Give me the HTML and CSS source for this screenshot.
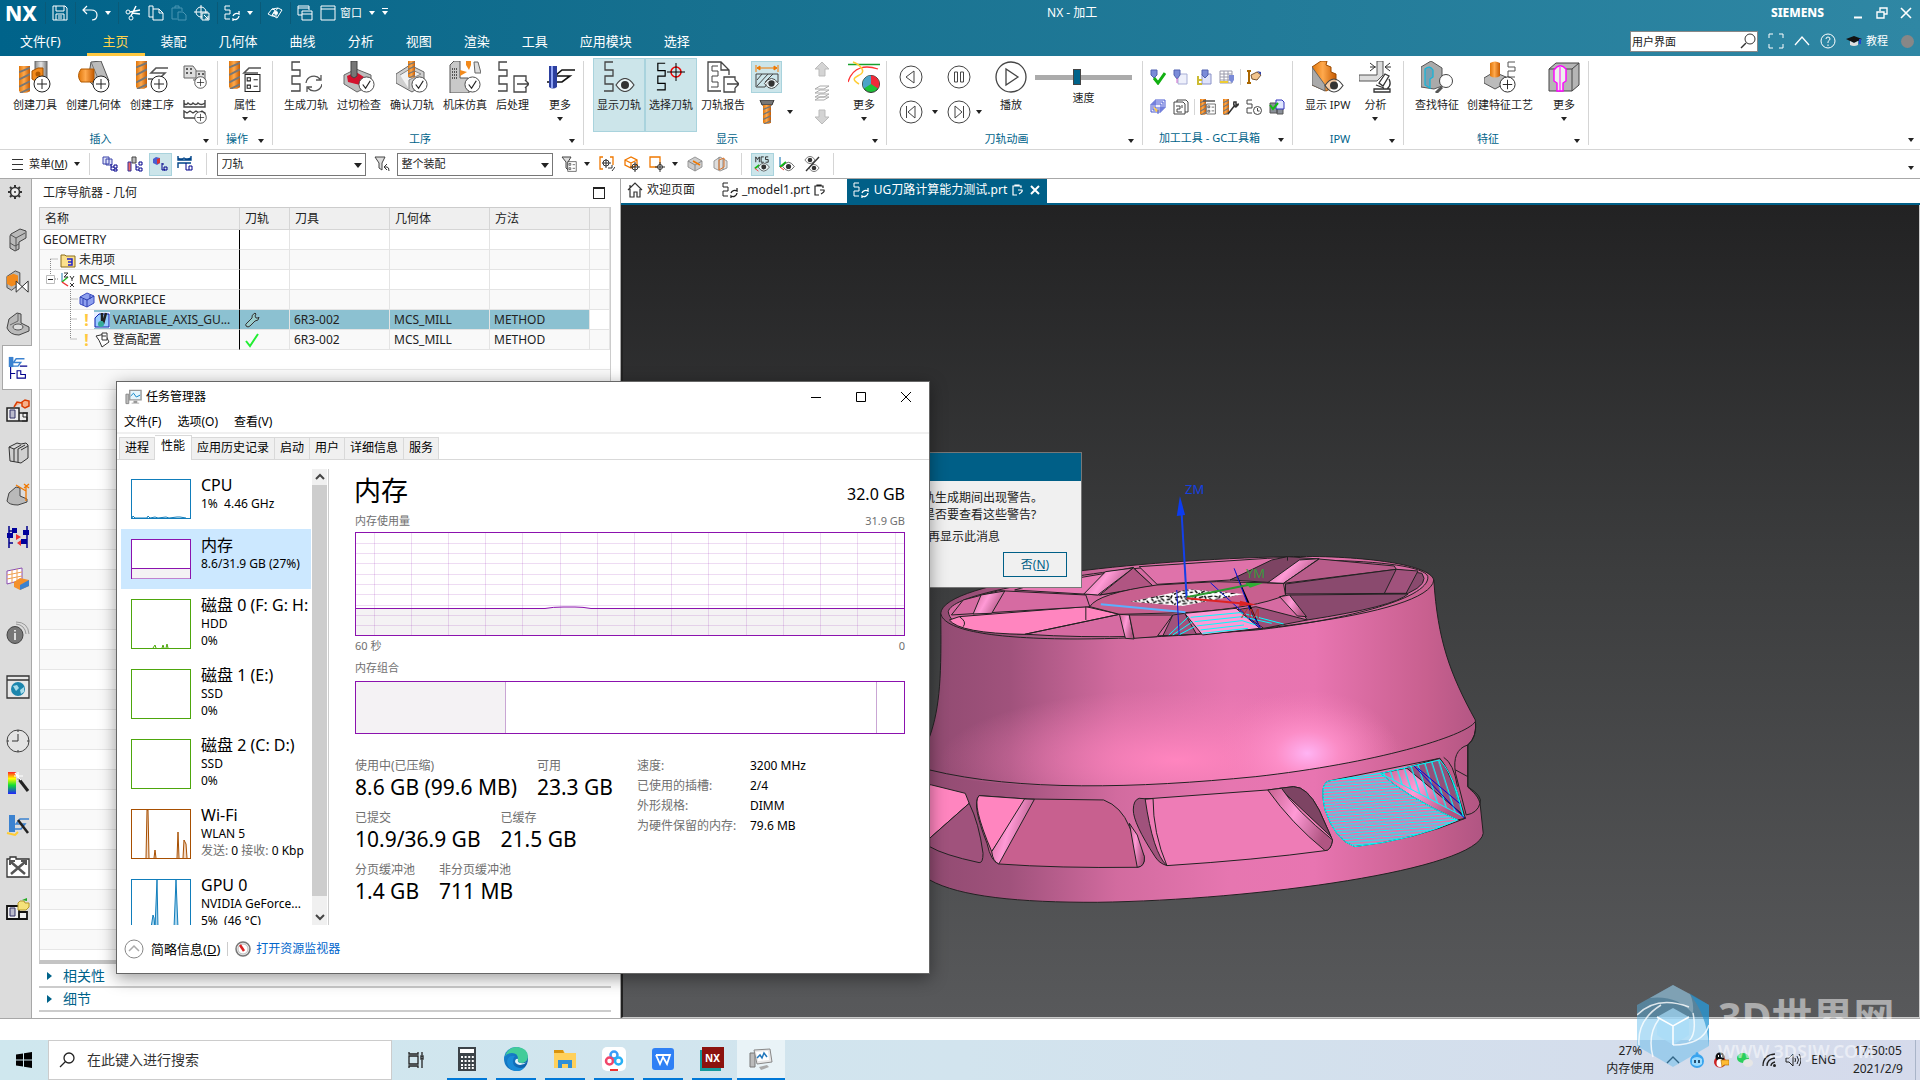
FILE: index.html
```html
<!DOCTYPE html>
<html lang="zh-CN">
<head>
<meta charset="utf-8">
<title>NX - 加工</title>
<link rel="stylesheet" href="styles.css">
</head>
<body>
<svg class="defs" aria-hidden="true">
  <defs>
    <linearGradient id="orange" x1="0" x2="1" y1="0" y2="0"><stop offset="0" stop-color="#e0760a"/><stop offset=".45" stop-color="#ffa94d"/><stop offset="1" stop-color="#c65a00"/></linearGradient>
    <linearGradient id="steel" x1="0" x2="1" y1="0" y2="0"><stop offset="0" stop-color="#8b8b8b"/><stop offset=".5" stop-color="#e6e6e6"/><stop offset="1" stop-color="#7a7a7a"/></linearGradient>
    <linearGradient id="edgeg" x1="0" x2="1" y1="0" y2="1"><stop offset="0" stop-color="#1a8ad6"/><stop offset="1" stop-color="#0c59a4"/></linearGradient>
    <linearGradient id="rainbow" x1="0" x2="0" y1="0" y2="1"><stop offset="0" stop-color="#f22"/><stop offset=".3" stop-color="#ff0"/><stop offset=".6" stop-color="#1d3"/><stop offset="1" stop-color="#22f"/></linearGradient>
  </defs>
  <symbol id="b-plus" viewBox="0 0 18 18"><circle cx="9" cy="9" r="8" fill="#fff" stroke="#222"/><path d="M9 4v10M4 9h10" stroke="#222" fill="none"/></symbol>
  <symbol id="b-check" viewBox="0 0 18 18"><circle cx="9" cy="9" r="8" fill="#fff" stroke="#444"/><path d="M5 9l3 4 5-8" stroke="#222" fill="none" stroke-width="1.3"/></symbol>
  <symbol id="b-drill" viewBox="0 0 10 30" preserveAspectRatio="none"><path d="M0 0h10v28q-5 4-10 0z" fill="url(#orange)"/><path d="M0 7l10-5M0 15l10-6M0 23l10-6M1 30l9-5" stroke="#777" stroke-width="2"/></symbol>
  <symbol id="b-zig" viewBox="0 0 12 32"><path d="M10 1H2v8h8v6H2v8h8v7H1" fill="none" stroke="currentColor" stroke-width="1.3"/></symbol>
  <symbol id="b-eye" viewBox="0 0 20 14"><path d="M1 7q9-13 18 0q-9 13-18 0z" fill="#fff" fill-opacity=".6" stroke="#444" stroke-width="1.2"/><circle cx="10" cy="7" r="4" fill="#333"/></symbol>
  <symbol id="b-list" viewBox="0 0 16 18"><path d="M1 1h14v16H1z" fill="#fff" stroke="#222"/><path d="M3 4h3v3H3zM3 11h3v3H3z" fill="none" stroke="#222"/><path d="M9 6h4M9 12h4" stroke="#222"/></symbol>

  <symbol id="i-tool" viewBox="0 0 32 32"><path d="M16 0h12v20H16z" fill="url(#steel)" stroke="#666"/><use href="#b-drill" x="0" y="5" width="11" height="27"/><path d="M13 10l6-3h5v11l-6 3-5-3z" fill="#f28a1c" stroke="#a55200"/><circle cx="19" cy="13" r="2.500" fill="#b25a00"/><use href="#b-plus" x="14" y="14" width="18" height="18"/></symbol>
  <symbol id="i-geom" viewBox="0 0 32 32"><path d="M13 1l10-1 8 20-12 8-9-9z" fill="#bbb" stroke="#555"/><path d="M13 1l6 14v12" fill="none" stroke="#777"/><path d="M3 8h13v13H3q-5-6 0-13z" fill="url(#orange)" stroke="#b25a00"/><use href="#b-plus" x="14" y="14" width="18" height="18"/></symbol>
  <symbol id="i-op" viewBox="0 0 32 32"><use href="#b-drill" x="0" y="0" width="11" height="28"/><path d="M32 7H20l-5 5h14l-6 6H12" fill="none" stroke="#555" stroke-width="1.600"/><use href="#b-plus" x="14" y="14" width="18" height="18"/></symbol>
  <symbol id="i-prog" viewBox="0 0 24 24"><path d="M1 1h9l3 4v8H1zM13 6h9v9H10" fill="#ddd" stroke="#666"/><path d="M3 4h2m2 0h2M3 8h2m2 0h2M15 9h2m2 0h2" stroke="#333" stroke-width="1.500"/><use href="#b-plus" x="11" y="11" width="13" height="13"/></symbol>
  <symbol id="i-method" viewBox="0 0 24 24"><path d="M1 0v7h21V0M1 3q2 3 4 0q3 3 5 0q3 3 5 0q3 3 7 0M1 18v-7l3 2 3-2 3 2 3-2 3 2 3-2 3 2v5M1 18h11" fill="none" stroke="#444" stroke-width="1.400"/><use href="#b-plus" x="11" y="11" width="13" height="13"/></symbol>
  <symbol id="i-prop" viewBox="0 0 32 32"><use href="#b-drill" x="0" y="0" width="11" height="28"/><path d="M32 7H20l-5 5h14" fill="none" stroke="#555" stroke-width="1.600"/><use href="#b-list" x="15" y="12" width="17" height="20"/></symbol>
  <symbol id="i-gen" viewBox="0 0 32 32"><use href="#b-zig" width="12" height="32"/><path d="M16 22a8 8 0 0 1 14-4M32 23a8 8 0 0 1-14 4M31 14v5h-5M17 31v-5h5" fill="none" stroke="#555" stroke-width="1.300"/></symbol>
  <symbol id="i-gouge" viewBox="0 0 32 32"><path d="M1 14l12-6 15 6v10l-14 7-13-8z" fill="#bdbdbd" stroke="#666"/><path d="M4 15l9-4 8 5-4 8-12-3z" fill="#d3122d"/><path d="M8 0h6v15l-3 2-3-2z" fill="#777" stroke="#444"/><use href="#b-check" x="15" y="15" width="17" height="17"/></symbol>
  <symbol id="i-verify" viewBox="0 0 32 32"><path d="M0 13L14 4l14 7v12l-12 8L0 22z" fill="#cfcfcf" stroke="#666"/><path d="M4 14l10-6 11 5-12 6v9" fill="#f2f2f2" stroke="#888"/><use href="#b-drill" x="12" y="0" width="7" height="17"/><use href="#b-check" x="15" y="15" width="17" height="17"/></symbol>
  <symbol id="i-sim" viewBox="0 0 32 32"><path d="M1 4l4-4h6v17h8l1 4v11H1z" fill="#c9c9c9" stroke="#555"/><path d="M25 1h4l3 11h-6z" fill="#ddd" stroke="#666"/><path d="M3 8h6M3 11h6M3 14h6M3 17h6" stroke="#555" stroke-width="2" stroke-dasharray="1 1"/><path d="M17 0h5v4l-2 5-3-5zM11 9l7 2-7 4z" fill="#f28a1c"/><use href="#b-check" x="15" y="15" width="17" height="17"/></symbol>
  <symbol id="i-post" viewBox="0 0 32 32"><use href="#b-zig" width="12" height="32"/><path d="M29 20v-5H17v16h12v-5M20 23h11M28 19l4 4-4 4" fill="none" stroke="#444" stroke-width="1.300"/></symbol>
  <symbol id="i-moreop" viewBox="0 0 32 32"><path d="M31 9H18l-7 6h15l-8 6H3" fill="none" stroke="#111" stroke-width="1.600"/><path d="M5 5h8v21q-4 3-8 0z" fill="#2c3f9e"/><path d="M8 5v22" stroke="#8fa2f2" stroke-width="2"/></symbol>
  <symbol id="i-show" viewBox="0 0 32 32"><use href="#b-zig" width="12" height="32"/><use href="#b-eye" x="12" y="17" width="20" height="14"/></symbol>
  <symbol id="i-pick" viewBox="0 0 32 32"><g color="#000"><use href="#b-zig" x="1" y="1" width="11" height="30"/></g><circle cx="21" cy="11" r="5" fill="none" stroke="#e00" stroke-width="1.500"/><path d="M12 11h18M21 2v18" stroke="#000"/></symbol>
  <symbol id="i-report" viewBox="0 0 32 32"><path d="M14 30H1V1h13l8 8v5M14 1v8h8" fill="none" stroke="#444" stroke-width="1.300"/><path d="M11 5H5v5h6v5H5v6h6v5H4" fill="none" stroke="#444"/><path d="M28 19v-3H17v15h11v-4M20 23h11M28 19l4 4-4 4" fill="#fff" stroke="#444" stroke-width="1.300"/></symbol>
  <symbol id="i-ipwshow" viewBox="0 0 26 26"><path d="M3 4h20M3 4l3-2v4zM23 4l-3-2v4zM2 1v7M24 1v7" stroke="#f07800" fill="#f07800"/><path d="M2 10h22v8H14l-3 5H2z" fill="none" stroke="#444"/><path d="M3 16l5-6M3 22l11-12M11 18l8-8" stroke="#444"/><use href="#b-eye" x="9" y="14" width="17" height="11"/></symbol>
  <symbol id="i-bolt" viewBox="0 0 16 24"><path d="M1 0h14l-2 5H3z" fill="#777" stroke="#333"/><use href="#b-drill" x="4" y="5" width="8" height="19"/></symbol>
  <symbol id="i-up" viewBox="0 0 16 16"><path d="M8 1l7 7h-4v7H5V8H1z" fill="#d4d4d4" stroke="#bbb"/></symbol>
  <symbol id="i-down" viewBox="0 0 16 16"><path d="M8 15l7-7h-4V1H5v7H1z" fill="#d4d4d4" stroke="#bbb"/></symbol>
  <symbol id="i-layers" viewBox="0 0 16 16"><path d="M1 4l5-3h9l-5 3zM1 8l5-3h9l-5 3zM1 12l5-3h9l-5 3zM1 15l5-3h9l-5 3z" fill="#fff" stroke="#aaa"/></symbol>
  <symbol id="i-moreshow" viewBox="0 0 32 32"><path d="M0 3.500h32" stroke="#16a02c" stroke-width="1.500"/><path d="M0 21C5 5 18 4 30 8" fill="none" stroke="#f33" stroke-width="1.300"/><path d="M5 1c8 3 12 9 8 12s-12 4-2 10" fill="none" stroke="#fc3" stroke-width="1.500"/><circle cx="23" cy="23" r="8.500" fill="#1cc238" stroke="#333"/><path d="M23 23V14.500a8.500 8.500 0 0 1 7 13z" fill="#f02a3a"/><path d="M23 23V14.500a8.500 8.500 0 0 0-7 13z" fill="#4ba3c7"/></symbol>
  <symbol id="i-prev" viewBox="0 0 24 24"><circle cx="12" cy="12" r="11" fill="none" stroke="#444"/><path d="M15 6v12l-8-6z" fill="none" stroke="#444"/></symbol>
  <symbol id="i-pause" viewBox="0 0 24 24"><circle cx="12" cy="12" r="11" fill="none" stroke="#444"/><path d="M7.500 7h3v10h-3zM13.500 7h3v10h-3z" fill="none" stroke="#444"/></symbol>
  <symbol id="i-first" viewBox="0 0 24 24"><circle cx="12" cy="12" r="11" fill="none" stroke="#444"/><path d="M16 6v12l-7-6zM7.500 6v12" fill="none" stroke="#444"/></symbol>
  <symbol id="i-last" viewBox="0 0 24 24"><circle cx="12" cy="12" r="11" fill="none" stroke="#444"/><path d="M8 6v12l7-6zM16.500 6v12" fill="none" stroke="#444"/></symbol>
  <symbol id="i-play" viewBox="0 0 32 32"><circle cx="16" cy="16" r="15" fill="none" stroke="#444" stroke-width="1.300"/><path d="M11 8v16l12-8z" fill="none" stroke="#444" stroke-width="1.300"/></symbol>
  <symbol id="g-check" viewBox="0 0 16 16"><path d="M1 1h6v5l-3 3-3-3z" fill="#7a8bd8" stroke="#5060b0"/><path d="M4 9l4 5 7-10" fill="none" stroke="#12b012" stroke-width="3"/></symbol>
  <symbol id="g-doc" viewBox="0 0 16 16"><path d="M5 5h9v10H5z" fill="#eef0fb" stroke="#a9afd6"/><path d="M1 1h6v5l-3 4-3-4z" fill="#7a8bd8" stroke="#5060b0"/><path d="M4 9v5" stroke="#c6c"/></symbol>
  <symbol id="g-tree" viewBox="0 0 16 16"><path d="M6 5h9v10H6z" fill="#dfe3fa" stroke="#8a92c8"/><path d="M2 7v8h4M2 11h4" stroke="#cb3" fill="none" stroke-width="2"/><path d="M6 1h6v5l-3 3-3-3z" fill="#7a8bd8" stroke="#5060b0"/></symbol>
  <symbol id="g-table" viewBox="0 0 16 16"><path d="M1 2h12v12H1zM1 5h12M1 8h12M1 11h12M5 2v12M9 2v12" fill="#fff" stroke="#99a"/><path d="M1 13h8" stroke="#ec3" stroke-width="2"/><path d="M10 6h5v5l-2 3-3-3z" fill="#7a8bd8"/></symbol>
  <symbol id="g-flag" viewBox="0 0 16 16"><path d="M1 2h4M3 2v13M1 14h4" stroke="#a60" stroke-width="2"/><path d="M5 6l6-3 4 3-4 5-5-1z" fill="#f2c48d" stroke="#753"/><path d="M11 2l4 1v3z" fill="#34a"/></symbol>
  <symbol id="g-stack" viewBox="0 0 16 16"><path d="M5 1h10v8H5zM3 3h10v8H3zM1 5h10v8H1z" fill="#eef" stroke="#4a5bd0"/><path d="M3 7l6 5-3 1z" fill="#fc4"/><path d="M8 11v4" stroke="#4a5bd0"/></symbol>
  <symbol id="g-pages" viewBox="0 0 16 16"><path d="M4 1h9l2 2v10H4z" fill="#fff" stroke="#444"/><path d="M1 3h9l2 2v10H1z" fill="#fff" stroke="#444"/><path d="M3 7h4v3H4v3h5M9 6v3" fill="none" stroke="#444"/></symbol>
  <symbol id="g-dlist" viewBox="0 0 16 16"><use href="#b-drill" width="6" height="16"/><path d="M3 2h12" stroke="#555" stroke-width="1.500"/><use href="#b-list" x="6" y="4" width="10" height="12"/></symbol>
  <symbol id="g-wrench" viewBox="0 0 16 16"><use href="#b-drill" width="6" height="16"/><path d="M5 15l7-9M11 3q-1 4 2 5l3-3-3 1v-3z" fill="#fff" stroke="#333" stroke-width="1.500"/></symbol>
  <symbol id="g-clock" viewBox="0 0 16 16"><path d="M6 1H1v4h5v4H1v5h5" fill="none" stroke="#444"/><circle cx="11.500" cy="11.500" r="4" fill="#fff" stroke="#444"/><path d="M11.500 9v3h2" fill="none" stroke="#444"/></symbol>
  <symbol id="g-mach" viewBox="0 0 16 16"><path d="M1 4h7v10H1zM8 9h6v6H8z" fill="#8a8f98" stroke="#555"/><path d="M7 1h6l2 2v7H7z" fill="#dfe6ff" stroke="#33b"/><path d="M1 6l3 4 5-6" fill="none" stroke="#1b1" stroke-width="2"/></symbol>
  <symbol id="i-ipw" viewBox="0 0 32 32"><path d="M0 6l9-6h6l-1 4 5 2v5l5 2v12l-10 5L0 24z" fill="url(#orange)" stroke="#9c4b00"/><path d="M0 6v18l13 6V24z" fill="#aaa" stroke="#666"/><use href="#b-eye" x="12" y="17" width="20" height="15"/></symbol>
  <symbol id="i-analysis" viewBox="0 0 32 32"><path d="M18 0h6v14l-6 6H0v-6h18z" fill="#ddd" stroke="#555"/><path d="M11 2l5 4-5 4M31 2l-5 4 5 4M11 6h6M26 6h6" fill="none" stroke="#333"/><path d="M15 31h16v-3H15zM20 22l6-9 4 2-6 10zM17 24l8 3M30 18q3 6-2 10" fill="#fff" stroke="#333" stroke-width="1.300"/></symbol>
  <symbol id="i-find" viewBox="0 0 32 32"><path d="M0 6l10-6 11 7v18l-8 3L0 26z" fill="#aaa" stroke="#555"/><path d="M4 8q5-4 8 1v7l-3 2v9l-5-3z" fill="#7b9fb0" stroke="#19b5d8" stroke-width="1.300"/><path d="M21 26l-6 6" stroke="#555" stroke-width="3"/><circle cx="25" cy="20" r="6.500" fill="#fff" stroke="#444"/></symbol>
  <symbol id="i-feat" viewBox="0 0 32 32"><path d="M0 17l10-6 12 5v6l-11 6-11-6z" fill="#bbb" stroke="#555"/><path d="M6 2q5-3 10 0v13q-5 3-10 0z" fill="url(#orange)"/><path d="M31 1h-7v5h7v4h-7v6h7" fill="none" stroke="#555"/><use href="#b-plus" x="15" y="15" width="17" height="17"/></symbol>
  <symbol id="i-morefeat" viewBox="0 0 32 32"><path d="M1 8l7-6h23v22l-7 6H1z" fill="#b5b5b5" stroke="#444"/><path d="M1 8h23v22M24 8l7-6" fill="none" stroke="#444"/><path d="M6 20V9q6-8 12-1v12l-3 2v8H9v-8z" fill="#eee" stroke="#f0f" stroke-width="1.400"/><path d="M12 6v24" stroke="#f0f"/></symbol>

  <symbol id="q-save" viewBox="0 0 16 16"><path d="M1 1h12l2 2v12H1zM4 1v5h8V1M4 15V9h8v6M6 11h4M6 13h4" fill="none" stroke="#fff"/></symbol>
  <symbol id="q-undo" viewBox="0 0 16 16"><path d="M5 1L1 5l4 4M1 5h8q6 0 6 5t-5 5" fill="none" stroke="#fff" stroke-width="1.200"/></symbol>
  <symbol id="q-cut" viewBox="0 0 16 16"><circle cx="3" cy="7" r="2" fill="none" stroke="#fff"/><circle cx="6" cy="13" r="2" fill="none" stroke="#fff"/><path d="M5 7l10-2M6 11L11 1M7 8l8 1" stroke="#fff" stroke-width="1.500"/></symbol>
  <symbol id="q-copy" viewBox="0 0 16 16"><path d="M5 4V1h-4v11h4M5 4h6l4 4v7H5zM11 4v4h4" fill="none" stroke="#fff"/></symbol>
  <symbol id="q-paste" viewBox="0 0 16 16"><path d="M6 14H1V3h10v3M4 3V1h4v2M7 7h5l3 3v5H7z" fill="none" stroke="#4a96b3"/></symbol>
  <symbol id="q-target" viewBox="0 0 16 16"><circle cx="7" cy="7" r="5" fill="none" stroke="#fff"/><path d="M7 0v14M0 7h14" stroke="#fff"/><path d="M8 8h7v7H8z" fill="#15708f" stroke="#fff"/><path d="M10 10l4 4v-3M14 14h-3" fill="none" stroke="#fff"/></symbol>
  <symbol id="q-zig" viewBox="0 0 16 16"><path d="M6 1H1v4h5v4H1v5h5" fill="none" stroke="currentColor"/><path d="M9 11a4 4 0 0 1 6-2v-3M15 11a4 4 0 0 1-6 3v2" fill="none" stroke="currentColor" stroke-width="1.300"/></symbol>
  <symbol id="q-plane" viewBox="0 0 16 16"><path d="M1 9l4-5 3 1-3 6zM5 10l6-7 4 2-5 8z" fill="none" stroke="#fff"/><path d="M5 4l6-1M5 11h5" stroke="#fff"/><circle cx="9" cy="8" r="2" fill="#fff"/></symbol>
  <symbol id="q-wins" viewBox="0 0 16 16"><path d="M1 1h11v4M1 1v9h4M1 3h11M5 6h10v9H5zM5 9h10" fill="none" stroke="#fff"/></symbol>
  <symbol id="q-win" viewBox="0 0 16 16"><path d="M1 1h14v14H1zM1 4h14" fill="none" stroke="#fff"/></symbol>
  <symbol id="q-mag" viewBox="0 0 16 16"><circle cx="10" cy="6" r="5" fill="none" stroke="#333"/><path d="M6 10l-5 5" stroke="#333" stroke-width="1.500"/></symbol>

  <symbol id="t-nav1" viewBox="0 0 16 16"><path d="M1 1h6v7H1zM4 3h6v6H4z" fill="#dfe3fa" stroke="#3a43a8"/><path d="M9 8v6h3M9 11h3M12 9h3v3h-3zM12 13h3v2h-3z" fill="none" stroke="#00008b"/></symbol>
  <symbol id="t-nav2" viewBox="0 0 16 16"><path d="M5 1h4v6H5z" fill="#bbb" stroke="#444"/><path d="M1 6h3v9H1z" fill="#e66" stroke="#339"/><path d="M9 8v6h3M9 11h3M12 6h3v3h-3zM12 12h3v3h-3z" fill="none" stroke="#00008b"/></symbol>
  <symbol id="t-nav3" viewBox="0 0 16 16"><path d="M1 3l3-2 4 1v5l-3 2-4-2z" fill="#4b5fd0"/><path d="M5 3l3-1v5l-3 1z" fill="#d33"/><path d="M10 7v7h3M12 11h3v3h-3zM10 8h2" fill="none" stroke="#00008b"/></symbol>
  <symbol id="t-nav4" viewBox="0 0 16 16"><path d="M1 0v4h13V0M1 2q3 2 6 0q3 2 7 0M1 12V7h13" fill="none" stroke="#048" stroke-width="1.400"/><path d="M9 7v7h3M12 10h3v4h-3z" fill="none" stroke="#00008b"/></symbol>
  <symbol id="t-filter" viewBox="0 0 16 16"><path d="M1 1h10L8 7v7l-3-2V7z" fill="#ddd" stroke="#444"/><path d="M10 11h3q2 0 2 4M10 11l3-3M10 11l3 3" fill="none" stroke="#333"/></symbol>
  <symbol id="t-flist" viewBox="0 0 16 16"><path d="M1 1h9L7 6v8l-2-2V6z" fill="#ddd" stroke="#444"/><use href="#b-list" x="6" y="5" width="10" height="11"/></symbol>
  <symbol id="t-brk" viewBox="0 0 16 16"><path d="M4 1H1v12h3M11 1h3v8" fill="none" stroke="#f07800" stroke-width="1.300"/><path d="M7 3v9M3 7h9M9 12h4v-3M13 15l3-4" stroke="#333" fill="none"/><circle cx="7" cy="7" r="3" fill="none" stroke="#333"/></symbol>
  <symbol id="t-cube" viewBox="0 0 16 16"><path d="M1 4l6-3 6 3v5l-6 3-6-3zM1 4l6 3 6-3M7 7v5" fill="#fff" stroke="#f07800" stroke-width="1.300"/><circle cx="11" cy="11" r="3" fill="none" stroke="#333"/><path d="M11 6v10M6 11h10" stroke="#333"/></symbol>
  <symbol id="t-sq" viewBox="0 0 16 16"><path d="M1 1h10v10H1z" fill="none" stroke="#f07800" stroke-width="1.300"/><circle cx="11" cy="11" r="2.500" fill="#fff" stroke="#333"/><path d="M11 6v10M6 11h10" stroke="#333"/></symbol>
  <symbol id="t-box" viewBox="0 0 16 16"><path d="M1 5l7-4 7 4v6l-7 4-7-4z" fill="#ccc" stroke="#999"/><path d="M1 5l7 4 7-4M8 9v6" fill="none" stroke="#888"/><path d="M6 5l7 4" stroke="#f07800" stroke-width="1.500"/></symbol>
  <symbol id="t-box2" viewBox="0 0 16 16"><path d="M2 5l6-4 7 4v7l-7 3-6-3z" fill="#ddd" stroke="#999"/><path d="M7 1v13M11 3v11" stroke="#888"/><path d="M7 4l5-2v9l-5 3z" fill="none" stroke="#e0762a"/></symbol>
  <symbol id="t-mcs" viewBox="0 0 18 18"><path d="M2 7V1l2 3 2-3v6M11 1H8v6h3M16 1h-3v3h3v3h-3" fill="none" stroke="#222"/><path d="M1 14l5-4" stroke="#1b1" stroke-width="2"/><path d="M1 14l4 3" stroke="#f33"/><use href="#b-eye" x="4" y="7" width="14" height="11"/></symbol>
  <symbol id="t-csys" viewBox="0 0 16 16"><path d="M1 1v10" stroke="#06a"/><path d="M1 11l6-5" stroke="#1b1" stroke-width="2"/><path d="M1 11l4 3" stroke="#f33"/><use href="#b-eye" x="3" y="5" width="13" height="11"/></symbol>
  <symbol id="t-hide" viewBox="0 0 16 16"><use href="#b-eye" x="0" y="0" width="12" height="8"/><use href="#b-eye" x="4" y="8" width="12" height="8"/><path d="M15 1L2 15" stroke="#333" stroke-width="1.400"/></symbol>
  <symbol id="t-home" viewBox="0 0 16 16"><path d="M1 8l7-7 7 7M3 7v8h4v-5h3v5h3V7M3 3v3" fill="none" stroke="#333" stroke-width="1.200"/></symbol>
  <symbol id="t-pad" viewBox="0 0 12 12"><path d="M5 11H1V2h8v2M3 2V1h4v1M6 6h4q1 2-3 4" fill="none" stroke="currentColor" stroke-width="1.200"/></symbol>

  <symbol id="s-gear" viewBox="0 0 16 16"><circle cx="8" cy="8" r="4.500" fill="#eee" stroke="#333" stroke-width="1.600"/><circle cx="8" cy="8" r="1" fill="#333"/><path d="M8 1v2M8 13v2M1 8h2M13 8h2M3 3l1.500 1.500M11.500 11.500L13 13M13 3l-1.500 1.500M3 13l1.500-1.500" stroke="#333" stroke-width="2"/></symbol>
  <symbol id="s-asm" viewBox="0 0 24 24"><path d="M5 6l9-5 6 2v7l-7 4v7l-4 2-5-3V8z" fill="#b9b9b9" stroke="#444"/><path d="M5 7l5 3 9-5M10 10v12M4 15l5 3 4-2" fill="none" stroke="#555"/></symbol>
  <symbol id="s-con" viewBox="0 0 26 26"><path d="M1 14V7l9-6 5 2v12l-9 7-5-3z" fill="#b9b9b9" stroke="#444"/><path d="M1 7l7-3 5 2v9l-7 3-5-3z" fill="#f28a1c"/><path d="M11 12v12l13-12v12z" fill="#fff" stroke="#222"/></symbol>
  <symbol id="s-part" viewBox="0 0 24 24"><path d="M1 16l2-9 8-6 4 1v9l8 4v4l-10 4q-9 0-12-7z" fill="#b9b9b9" stroke="#444"/><ellipse cx="12" cy="15" rx="5" ry="3" fill="#ddd" stroke="#555"/><path d="M4 13l8-4V2" fill="none" stroke="#666"/></symbol>
  <symbol id="s-op" viewBox="0 0 24 26"><path d="M2 1h5v11H2z" fill="#3b82d0"/><path d="M19 3h-9l-3 4h8l-3 4H4" fill="none" stroke="#3b82d0" stroke-width="1.500"/><path d="M14 11h8M4 12v13M4 19h5M11 16h4v4h5v4h-9z" fill="none" stroke="#00008b" stroke-width="1.200"/></symbol>
  <symbol id="s-mach" viewBox="0 0 24 24"><path d="M1 9h12v13H1zM13 14h8v8h-8z" fill="#eee" stroke="#222" stroke-width="1.500"/><path d="M4 11h5v8H4z" fill="#bbc" stroke="#336"/><path d="M22 14h-5v4h4v4h-5" fill="none" stroke="#222"/><path d="M8 8l3-5 5 1M16 3l3-2 4 1v5l-4 2-3-2z" fill="#f7b08a" stroke="#d93c00" stroke-width="1.500"/></symbol>
  <symbol id="s-books" viewBox="0 0 24 24"><path d="M3 6l8-4 4 1 5-1 2 2v13l-7 5-5-1-6-1zM3 6l5 2 7-4M8 8v13M12 8l7-4M12 8v13M15 9l7-4" fill="#d0d0d0" stroke="#333"/></symbol>
  <symbol id="s-dim" viewBox="0 0 24 24"><path d="M1 18l2-8 7-6 4 1v8l7 3v3l-9 3q-9 0-11-4z" fill="#b9b9b9" stroke="#444"/><path d="M10 2l10 6M20 2v16M18 1l5 4M23 1l-5 4" stroke="#f07800" stroke-width="1.300"/></symbol>
  <symbol id="s-flow" viewBox="0 0 24 24"><path d="M3 1v22M3 6h4M3 18h4M21 1v22M21 8h-4" stroke="#00008b" stroke-width="1.500"/><path d="M1 8h6v5H1zM6 3h5v5H6zM17 5h6v5h-6zM15 14h6v5h-6z" fill="#00009b"/><path d="M10 9l5 3-5 3zM15 15l-4 3 4 3z" fill="#e33"/></symbol>
  <symbol id="s-sched" viewBox="0 0 24 24"><path d="M1 4l15-3v12L1 17z" fill="#fff" stroke="#8a4fb0"/><path d="M1 8l15-3M1 12l15-3M6 3v13M11 2v12" stroke="#f0a050"/><path d="M8 15l6-4 9 2v6l-9 4-6-3z" fill="#f4902a"/><path d="M14 18l9-5v6l-9 4z" fill="#3b82d0"/></symbol>
  <symbol id="s-info" viewBox="0 0 24 24"><ellipse cx="9" cy="14" rx="8" ry="8.500" fill="#777" stroke="#444"/><path d="M9 12v7M9 9v1.500" stroke="#fff" stroke-width="1.500"/><path d="M10 3q9 1 10 10M10 1q12 0 13 12" fill="none" stroke="#999"/></symbol>
  <symbol id="s-web" viewBox="0 0 24 24"><path d="M1 1h22v22H1zM1 5h22" fill="#e8e8e8" stroke="#333" stroke-width="1.300"/><circle cx="12" cy="14" r="7" fill="#1c86ad"/><path d="M7 11l4-1 2 3-3 3zM14 15l4-3v5l-3 2z" fill="#a8dcea"/></symbol>
  <symbol id="s-clock" viewBox="0 0 24 24"><circle cx="12" cy="12" r="11" fill="#e4e4e4" stroke="#444"/><path d="M12 5v7H6M12 1v2M12 21v2M1 12h2M21 12h2" fill="none" stroke="#333"/></symbol>
  <symbol id="s-color" viewBox="0 0 24 24"><path d="M2 1h8v22H2z" fill="url(#rainbow)"/><path d="M12 7l10 13" stroke="#222" stroke-width="3"/><path d="M12 1v9M8 5h9M9 2l6 7" stroke="#fff" stroke-width="1.200"/></symbol>
  <symbol id="s-wand" viewBox="0 0 24 24"><path d="M3 2h6v17H3z" fill="#3b82d0"/><path d="M23 6h-9l-4 5h9l-4 5H4" fill="none" stroke="#3b82d0" stroke-width="1.500"/><path d="M12 7l10 13" stroke="#222" stroke-width="2.500"/><path d="M1 20l8 2 3-3" stroke="#fc3" stroke-width="2" fill="none"/></symbol>
  <symbol id="s-tools" viewBox="0 0 24 24"><path d="M1 22V4h3V2h6v2h13v18z" fill="#fff" stroke="#333" stroke-width="1.300"/><path d="M5 7l14 12M19 7L5 19" stroke="#555" stroke-width="2.500"/><path d="M4 10V6h5M15 6h5v4" fill="none" stroke="#555" stroke-width="2"/></symbol>
  <symbol id="s-mopen" viewBox="0 0 24 24"><path d="M1 9h12v13H1zM13 15h8v7h-8z" fill="#eee" stroke="#111" stroke-width="1.800"/><path d="M4 11h5v8H4z" fill="#bbc" stroke="#336"/><path d="M12 6l2-2h4l1 2h4v4l-3 3h-8z" fill="#f5e27a" stroke="#b59a2c"/><path d="M16 3l5-2v3z" fill="#2a2"/></symbol>
</svg>

<div class="desktop">
  <header class="title">
    <div class="quick">
      <span class="nx">NX</span>
      <i class="vs"></i><button class="qb"><svg><use href="#q-save"/></svg></button>
      <i class="vs"></i><button class="qb"><svg><use href="#q-undo"/></svg></button><span class="dn white"></span>
      <i class="vs"></i><button class="qb"><svg><use href="#q-cut"/></svg></button><button class="qb"><svg><use href="#q-copy"/></svg></button><button class="qb"><svg><use href="#q-paste"/></svg></button><button class="qb"><svg><use href="#q-target"/></svg></button>
      <i class="vs"></i><button class="qb"><svg><use href="#q-zig"/></svg></button><span class="dn white"></span>
      <i class="vs"></i><button class="qb"><svg><use href="#q-plane"/></svg></button>
      <i class="vs"></i><button class="qb"><svg><use href="#q-wins"/></svg></button><button class="qb wide"><svg><use href="#q-win"/></svg>窗口</button><span class="dn white"></span><span class="dn white bar"></span>
    </div>
    <h1>NX - 加工</h1>
    <div class="brand"><b>SIEMENS</b>
      <button aria-label="最小化"><svg viewBox="0 0 12 12"><path d="M2 10.500h8" stroke="#fff" stroke-width="2"/></svg></button>
      <button aria-label="还原"><svg viewBox="0 0 12 12"><path d="M4 4V1h7v6H8M1 5h7v6H1z" fill="none" stroke="#fff" stroke-width="1.400"/></svg></button>
      <button aria-label="关闭"><svg viewBox="0 0 12 12"><path d="M1 1l10 10M11 1L1 11" stroke="#fff" stroke-width="1.600"/></svg></button>
    </div>
    <nav class="tabs">
      <a href="#">文件(F)</a><a href="#" class="on">主页</a><a href="#">装配</a><a href="#">几何体</a><a href="#">曲线</a><a href="#">分析</a><a href="#">视图</a><a href="#">渲染</a><a href="#">工具</a><a href="#">应用模块</a><a href="#">选择</a>
    </nav>
    <div class="help">
      <span class="find"><input aria-label="查找命令" value="用户界面"><svg><use href="#q-mag"/></svg></span>
      <button aria-label="全屏"><svg viewBox="0 0 16 16"><path d="M1 5V1h4M11 1h4v4M15 11v4h-4M5 15H1v-4" fill="none" stroke="#fff"/></svg></button>
      <button aria-label="折叠"><svg viewBox="0 0 16 16"><path d="M1 12l7-8 7 8" fill="none" stroke="#fff" stroke-width="1.300"/></svg></button>
      <button aria-label="帮助"><svg viewBox="0 0 16 16"><circle cx="8" cy="8" r="7" fill="none" stroke="#fff"/><path d="M6 6q0-2 2-2t2 2q0 1-2 2.500V10M8 11.500V13" fill="none" stroke="#fff"/></svg></button>
      <button class="tut"><svg viewBox="0 0 16 16"><path d="M0 6l8-3 8 3-8 4z" fill="#111"/><path d="M4 8v4q4 2 8 0V8l-4 2z" fill="#ddd"/><path d="M14 6v5" stroke="#24c" stroke-width="2"/></svg>教程</button>
      <span class="dot"></span>
    </div>
  </header>

  <section class="ribbon">
    <div class="grp g1"><div class="body">
      <button class="big"><svg><use href="#i-tool"/></svg>创建刀具</button>
      <button class="big"><svg><use href="#i-geom"/></svg>创建几何体</button>
      <button class="big"><svg><use href="#i-op"/></svg>创建工序</button>
      <div class="col"><button><svg class="s24"><use href="#i-prog"/></svg></button><button><svg class="s24"><use href="#i-method"/></svg></button></div>
    </div><footer>插入<span class="dn"></span></footer></div>
    <div class="grp g2"><div class="body"><button class="big"><svg><use href="#i-prop"/></svg>属性<span class="dn"></span></button></div><footer>操作<span class="dn"></span></footer></div>
    <div class="grp g3"><div class="body">
      <button class="big"><svg><use href="#i-gen"/></svg>生成刀轨</button>
      <button class="big"><svg><use href="#i-gouge"/></svg>过切检查</button>
      <button class="big"><svg><use href="#i-verify"/></svg>确认刀轨</button>
      <button class="big"><svg><use href="#i-sim"/></svg>机床仿真</button>
      <button class="big"><svg><use href="#i-post"/></svg>后处理</button>
      <button class="big"><svg><use href="#i-moreop"/></svg>更多<span class="dn"></span></button>
    </div><footer>工序<span class="dn"></span></footer></div>
    <div class="grp g4"><div class="body">
      <button class="big sel"><svg><use href="#i-show"/></svg>显示刀轨</button>
      <button class="big sel"><svg><use href="#i-pick"/></svg>选择刀轨</button>
      <button class="big"><svg><use href="#i-report"/></svg>刀轨报告</button>
      <div class="col c4"><button class="sel sq"><svg><use href="#i-ipwshow"/></svg></button><button class="drop"><svg class="s24"><use href="#i-bolt"/></svg><span class="dn"></span></button></div>
      <div class="col tri"><button><svg><use href="#i-up"/></svg></button><button><svg><use href="#i-layers"/></svg></button><button><svg><use href="#i-down"/></svg></button></div>
      <button class="big"><svg><use href="#i-moreshow"/></svg>更多<span class="dn"></span></button>
    </div><footer>显示<span class="dn"></span></footer></div>
    <div class="grp g5"><div class="body">
      <div class="ctl">
        <button aria-label="后退"><svg><use href="#i-prev"/></svg></button><span></span><button aria-label="暂停"><svg><use href="#i-pause"/></svg></button><span></span>
        <button aria-label="第一步"><svg><use href="#i-first"/></svg></button><span class="dn"></span><button aria-label="最后一步"><svg><use href="#i-last"/></svg></button><span class="dn"></span>
      </div>
      <button class="big"><svg><use href="#i-play"/></svg>播放</button>
      <label class="speed"><input type="range" min="0" max="100" value="43">速度</label>
    </div><footer>刀轨动画<span class="dn"></span></footer></div>
    <div class="grp g6"><div class="body">
      <div class="mini"><button><svg><use href="#g-check"/></svg></button><button><svg><use href="#g-doc"/></svg></button><button><svg><use href="#g-tree"/></svg></button><button><svg><use href="#g-table"/></svg></button><i></i><button><svg><use href="#g-flag"/></svg></button></div>
      <div class="mini"><button><svg><use href="#g-stack"/></svg></button><button><svg><use href="#g-pages"/></svg></button><i></i><button><svg><use href="#g-dlist"/></svg></button><button><svg><use href="#g-wrench"/></svg></button><button><svg><use href="#g-clock"/></svg></button><button><svg><use href="#g-mach"/></svg></button></div>
    </div><footer>加工工具 - GC工具箱<span class="dn"></span></footer></div>
    <div class="grp g7"><div class="body">
      <button class="big"><svg><use href="#i-ipw"/></svg>显示 IPW</button>
      <button class="big"><svg><use href="#i-analysis"/></svg>分析<span class="dn"></span></button>
    </div><footer>IPW<span class="dn"></span></footer></div>
    <div class="grp g8"><div class="body">
      <button class="big"><svg><use href="#i-find"/></svg>查找特征</button>
      <button class="big"><svg><use href="#i-feat"/></svg>创建特征工艺</button>
      <button class="big"><svg><use href="#i-morefeat"/></svg>更多<span class="dn"></span></button>
    </div><footer>特征<span class="dn"></span></footer></div>
    <span class="dn end"></span>
  </section>

  <section class="bar2">
    <button class="menu"><svg viewBox="0 0 10 10"><path d="M0 .5h10M0 5h10M0 9.500h10" stroke="#333"/></svg>菜单(<u>M</u>)<span class="dn"></span></button>
    <i class="sep"></i>
    <button class="tb"><svg><use href="#t-nav1"/></svg></button><button class="tb"><svg><use href="#t-nav2"/></svg></button><button class="tb sel"><svg><use href="#t-nav3"/></svg></button><button class="tb"><svg><use href="#t-nav4"/></svg></button>
    <i class="sep"></i>
    <span class="pick p1"><select aria-label="类型过滤器"><option>刀轨</option></select><span class="dn lg"></span></span>
    <button class="tb"><svg><use href="#t-filter"/></svg></button>
    <span class="pick p2"><select aria-label="选择范围"><option>整个装配</option></select><span class="dn lg"></span></span>
    <button class="tb"><svg><use href="#t-flist"/></svg></button><span class="dn"></span>
    <button class="tb"><svg><use href="#t-brk"/></svg></button><button class="tb"><svg><use href="#t-cube"/></svg></button><button class="tb"><svg><use href="#t-sq"/></svg></button><span class="dn"></span>
    <button class="tb"><svg><use href="#t-box"/></svg></button><button class="tb"><svg><use href="#t-box2"/></svg></button>
    <i class="sep"></i>
    <button class="tb sel"><svg><use href="#t-mcs"/></svg></button><button class="tb"><svg><use href="#t-csys"/></svg></button><button class="tb"><svg><use href="#t-hide"/></svg></button>
    <i class="sep"></i>
    <span class="dn end"></span>
  </section>

  <main class="work">
    <aside class="rail">
      <button class="gear"><svg><use href="#s-gear"/></svg></button>
      <button><svg><use href="#s-asm"/></svg></button><button><svg><use href="#s-con"/></svg></button><button><svg><use href="#s-part"/></svg></button>
      <button class="on"><svg><use href="#s-op"/></svg></button>
      <button><svg><use href="#s-mach"/></svg></button><button><svg><use href="#s-books"/></svg></button><button><svg><use href="#s-dim"/></svg></button><button><svg><use href="#s-flow"/></svg></button><button><svg><use href="#s-sched"/></svg></button>
      <button class="far"><svg><use href="#s-info"/></svg></button><button class="far"><svg><use href="#s-web"/></svg></button><button class="far"><svg><use href="#s-clock"/></svg></button>
      <button><svg><use href="#s-color"/></svg></button><button><svg><use href="#s-wand"/></svg></button><button><svg><use href="#s-tools"/></svg></button><button><svg><use href="#s-mopen"/></svg></button>
    </aside>
    <section class="nav">
      <div class="navhead"><span>工序导航器 - 几何</span><button aria-label="最大化"></button></div>
      <div class="treebox">
        <table>
          <colgroup><col class="c0"><col class="c1"><col class="c2"><col class="c2"><col class="c2"><col></colgroup>
          <thead><tr><th>名称</th><th>刀轨</th><th>刀具</th><th>几何体</th><th>方法</th><th></th></tr></thead>
          <tbody>
            <tr><td><span class="tn l0">GEOMETRY</span></td><td></td><td></td><td></td><td></td><td></td></tr>
            <tr><td><span class="tn l1"><svg viewBox="0 0 16 16"><path d="M1 3h4l1 1h9v11H1z" fill="#fbe08c" stroke="#8a6d1a"/><path d="M7 7h5v6H8M8 10h4" fill="none" stroke="#22c" stroke-width="1.500"/></svg>未用项</span></td><td></td><td></td><td></td><td></td><td></td></tr>
            <tr><td><span class="tn l1"><svg viewBox="0 0 16 16"><path d="M2 1v9" stroke="#27a"/><path d="M2 10l6-5" stroke="#2b2" stroke-width="1.500"/><path d="M2 10l6 4" stroke="#e33" stroke-width="1.500"/><path d="M4 1h4L4 5h4M10 4l2 3 2-3M12 7v2M10 11l4 4M14 11l-4 4" fill="none" stroke="#333"/></svg>MCS_MILL</span></td><td></td><td></td><td></td><td></td><td></td></tr>
            <tr><td><span class="tn l2"><svg viewBox="0 0 16 16"><path d="M1 5l7-4 7 3v7l-7 4-7-3z" fill="#8ea0ee" stroke="#3a4cc0"/><path d="M1 5l7 3 7-4M8 8v7M4 7v6M11 3v4" fill="none" stroke="#2a3cb0"/></svg>WORKPIECE</span></td><td></td><td></td><td></td><td></td><td></td></tr>
            <tr class="cur"><td><span class="tn l3"><b>!</b><svg viewBox="0 0 16 16"><path d="M0 0h16v16H0z" fill="#e8eeff"/><path d="M1 15V6l4-4h10v13z" fill="#9cf" stroke="#12a"/><path d="M8 1v8M12 1L9 12" stroke="#222" stroke-width="2.500"/><circle cx="7" cy="12" r="3" fill="#3a9"/></svg><em>VARIABLE_AXIS_GU...</em></span></td><td><svg class="st" viewBox="0 0 16 16"><path d="M2 14q-1-2 1-3l5-5q-1-3 3-5l1 1-1 2 1 2h2l1-1q0 4-4 4l-5 5q-2 2-4 0z" fill="#9cc" stroke="#333"/></svg></td><td>6R3-002</td><td>MCS_MILL</td><td>METHOD</td><td></td></tr>
            <tr><td><span class="tn l3"><b>!</b><svg viewBox="0 0 16 16"><path d="M2 4l9-2 4 8-7 5q-3-8-6-11z" fill="#fff" stroke="#333"/><path d="M8 1h5v7H8zM8 4h4" fill="#fff" stroke="#333"/></svg>登高配置</span></td><td><svg class="st" viewBox="0 0 16 16"><path d="M2 9l4 5 8-12" fill="none" stroke="#2e3" stroke-width="2"/></svg></td><td>6R3-002</td><td>MCS_MILL</td><td>METHOD</td><td></td></tr>
          </tbody>
        </table>
        <svg class="twigs" viewBox="0 0 40 120"><path d="M10.500 30v15M10.500 30H18M15 50h4M30.500 60v50M30.500 70H38M30.500 90H37M30.500 110H37" fill="none" stroke="#888" stroke-dasharray="1 1"/><path d="M6.500 46.500h8v8h-8z" fill="#fff" stroke="#bbb"/><path d="M8 50.500h5" stroke="#222"/></svg>
      </div>
      <button class="fold first">相关性</button>
      <button class="fold">细节</button>
    </section>
    <section class="view">
      <div class="files">
        <a href="#"><svg><use href="#t-home"/></svg>欢迎页面</a>
        <a href="#" class="m1"><svg><use href="#q-zig"/></svg>_model1.prt<svg class="s12"><use href="#t-pad"/></svg></a>
        <a href="#" class="on"><svg><use href="#q-zig"/></svg>UG刀路计算能力测试.prt<svg class="s12"><use href="#t-pad"/></svg><svg class="s12" viewBox="0 0 12 12"><path d="M2 2l8 8M10 2l-8 8" stroke="#fff" stroke-width="2"/></svg></a>
      </div>
      <div class="canvas">
        <svg viewBox="621 205 1299 811" preserveAspectRatio="xMinYMin meet">
          <defs>
            <linearGradient id="skin" x1="0" x2="1" y1="0" y2="0"><stop offset="0" stop-color="#8f4a70"/><stop offset=".16" stop-color="#a0527c"/><stop offset=".35" stop-color="#d26b9f"/><stop offset=".55" stop-color="#e676b0"/><stop offset=".7" stop-color="#e875b1"/><stop offset=".9" stop-color="#c8608f"/><stop offset="1" stop-color="#b05582"/></linearGradient>
            <radialGradient id="glow"><stop offset="0" stop-color="#ffb4f4"/><stop offset=".35" stop-color="#ff92cc" stop-opacity=".8"/><stop offset="1" stop-color="#f580b8" stop-opacity="0"/></radialGradient>
            <radialGradient id="warm"><stop offset="0" stop-color="#ff85bf"/><stop offset="1" stop-color="#f580b8" stop-opacity="0"/></radialGradient>
            <linearGradient id="tube" x1="0" x2="1" y1="0" y2=".4"><stop offset="0" stop-color="#c8608f"/><stop offset=".5" stop-color="#ff9ad6"/><stop offset="1" stop-color="#b05582"/></linearGradient>
            <pattern id="hatch" width="40" height="18" patternUnits="userSpaceOnUse" patternTransform="rotate(-5)"><path d="M0 5h40M0 14h40" stroke="#0ff" stroke-width="3"/></pattern>
            <pattern id="hatch2" width="18" height="22" patternUnits="userSpaceOnUse" patternTransform="rotate(-15)"><path d="M5 0v22" stroke="#0ff" stroke-width="3"/></pattern>
            <pattern id="speck" width="61" height="31" patternUnits="userSpaceOnUse"><path d="M0 0h61v31H0z" fill="#fff"/><path d="M2 3l9 3M17 1l-3 9M24 8l11-3M4 14l9-2M26 12l5 6M1 24l8-1M14 17l6 9M30 24l9-5M38 2l4 9M46 6l12-3M42 16l8 4M54 12l4 7M43 27l12-2M22 29l5-3M50 10l3 3" stroke="#000" stroke-width="4"/></pattern>
            <clipPath id="bodyclip"><path d="M103 520C105 700 102 800 75 890V1000C300 1055 600 1045 900 1010C1200 970 1430 890 1455 845C1390 700 1360 600 1350 420C1300 530 800 600 450 597C230 597 110 570 103 520z"/></clipPath>
          </defs>
          <g class="ink" transform="translate(900 440) scale(.3954 .3333)">
            <path fill="url(#skin)" d="M103 520C105 700 102 800 75 890L50 900V1300L75 1320C150 1370 300 1388 500 1387C900 1380 1460 1290 1475 1180L1467 1090C1460 1060 1440 1050 1436 1040V915Q1460 890 1455 840C1390 700 1360 600 1350 420C1340 370 1150 345 980 350C600 360 110 420 103 520z"/>
            <g clip-path="url(#bodyclip)" stroke="none"><ellipse cx="700" cy="960" rx="600" ry="210" fill="url(#warm)"/><ellipse cx="1030" cy="940" rx="230" ry="190" fill="url(#glow)"/></g>
            <path fill="#d66ba2" d="M122 515C130 470 300 430 560 390C900 345 1320 350 1335 410C1340 480 1100 545 900 570C700 590 500 597 320 583C180 578 128 560 122 515z"/>
            <path fill="none" d="M103 520C110 570 230 597 450 597C800 595 1340 530 1350 420"/>
            <path fill="#ff85bf" d="M150 530L470 500L555 523L315 583Q150 580 125 540z"/>
            <path fill="#d66ba2" d="M160 480L250 452L470 465L480 500L130 525z"/>
            <path fill="url(#tube)" d="M205 465L265 453L232 520L185 522z"/>
            <path fill="#e87ab4" d="M320 440L520 400L590 382L640 440L505 465L290 450z"/>
            <path fill="url(#tube)" d="M520 395L590 384L500 465L465 462z"/>
            <path fill="#b05582" d="M590 384L640 438L505 465z"/>
            <path fill="#c8608f" d="M480 500Q500 460 650 435L800 425L970 430L975 465Q900 505 720 518L555 523z"/>
            <path fill="#df72aa" d="M605 380L930 355L980 352L835 420L650 433z"/>
            <path fill="#7d4463" d="M940 360L980 350L1060 357L970 430L835 420z"/>
            <path fill="url(#tube)" d="M1010 360L1060 356L970 430L930 428z"/>
            <path fill="#b85c8a" d="M1060 357L1250 378L1255 388L970 430z"/>
            <path fill="#8a4a6e" d="M1255 388L1320 400Q1340 430 1285 460L975 462V432z"/>
            <path fill="#a0527c" d="M1255 388L1310 393L1280 460H1225z"/>
            <path fill="#8a4a6e" d="M985 465L1285 462Q1250 500 1030 540z"/>
            <path fill="url(#tube)" d="M960 470L985 465L1028 530L1005 528z"/>
            <path fill="#9b4f77" d="M900 500L1030 540L920 565L850 510z"/>
            <path fill="url(#tube)" d="M555 523L580 525L592 597L570 595z"/>
            <path fill="#c8608f" d="M580 525H690L650 590L592 595z"/>
            <path fill="#ff9ad6" d="M720 520L850 505L910 565L765 585z"/>
            <path fill="#a0527c" d="M690 525L720 520L750 583L665 587z"/>
            <path fill="none" d="M315 583L555 523M470 500V540M980 350V362M150 530Q170 545 160 560"/>
            <path fill="none" d="M75 990C300 1055 600 1045 900 1010C1200 970 1430 890 1455 845M1436 915Q1458 895 1456 850"/>
            <path fill="#ff85bf" d="M50 1030L80 1035L165 1060L175 1090L75 1195H50z"/>
            <path fill="#a0527c" d="M75 1195L175 1090Q200 1150 210 1240Q210 1270 200 1268Q110 1245 75 1220z"/>
            <path fill="#c8608f" d="M200 1067L320 1077L515 1080Q560 1100 580 1160L618 1250Q620 1280 600 1282Q400 1285 250 1272Q230 1265 220 1210Q180 1090 200 1067z"/>
            <path fill="#ff85bf" d="M200 1067L320 1077L232 1235Q180 1090 200 1067z"/>
            <path fill="url(#tube)" d="M315 1077L340 1078L250 1272Q235 1265 232 1235z"/>
            <path fill="url(#tube)" d="M580 1150L600 1185L618 1250Q620 1280 600 1282z"/>
            <path fill="#a0527c" d="M605 1075Q590 1080 590 1110Q590 1150 645 1250Q655 1270 675 1277L640 1078z"/>
            <path fill="#ee7cb6" d="M620 1077L930 1050L995 1040Q1030 1040 1060 1110L1094 1200Q1090 1232 1075 1232Q900 1260 675 1277Q640 1240 620 1077z"/>
            <path fill="#7d4463" d="M960 1045L995 1040Q1030 1040 1060 1110L1090 1190z"/>
            <path fill="url(#tube)" d="M930 1050L965 1045Q1000 1110 1094 1200Q1090 1232 1075 1232Q990 1150 930 1050z"/>
            <path fill="none" d="M620 1077L640 1076Q640 1180 675 1277"/>
            <path fill="#e474ac" d="M1085 1023L1365 955Q1390 990 1410 1060L1430 1135Q1300 1200 1150 1220Q1100 1200 1075 1110Q1060 1030 1085 1023z"/>
            <path fill="url(#tube)" d="M1215 1000L1300 980L1430 1135L1410 1140Q1280 1070 1215 1000z"/>
            <path fill="#93507a" d="M1280 983L1365 955Q1390 990 1425 1125z"/>
            <path fill="url(#hatch)" class="cut" d="M1085 1023L1215 1000Q1280 1070 1410 1140Q1300 1200 1150 1220Q1100 1200 1075 1110Q1060 1030 1085 1023z"/>
            <path fill="url(#hatch2)" class="cut" d="M1215 1000L1365 960Q1390 990 1410 1060L1425 1130z"/>
            <path fill="none" d="M1436 1040Q1475 1070 1467 1090Q1460 1120 1432 1125L1405 1000Q1395 930 1436 915V1040M1405 990L1436 1010M1375 952Q1400 970 1410 1040"/>
            <path fill="none" stroke="#0000e0" d="M1300 978L1428 1135M1310 985L1415 1090"/>
            <g fill="none" stroke="#0ff"><path d="M680 585L730 530M690 585L740 545M705 585L745 560M735 532L860 518L970 552M745 545L865 530L940 550M750 558L865 542L900 555M760 570L870 555M765 580L880 565"/></g>
            <path fill="url(#speck)" stroke="none" d="M582 485L730 448L870 462L715 498z"/>
            <path d="M508 493L722 517" class="thick" stroke="#5ab0ff"/>
            <path d="M700 450L706 585M845 385L885 510L912 565M785 428L908 562" stroke="#0a14d8"/>
            <path d="M725 475L712 215" class="thick" stroke="#1440e8"/>
            <path d="M700 228L708 168L721 225z" fill="#0c3cf0" stroke="none"/>
            <path d="M725 472L880 435" class="thick" stroke="#2a9a2e"/><path d="M873 428L918 430L885 443z" fill="#2fae33" stroke="none"/>
            <path d="M725 475L860 490" class="thick" stroke="#d22"/><path d="M860 482L902 494L858 498z" fill="#d22" stroke="none"/>
          </g>
          <text x="1185" y="494" fill="#1540e0">ZM</text><text x="1246" y="578" fill="#3a9a3e">YM</text><text x="1241" y="618" fill="#b33">XM</text>
        </svg>
      </div>
    </section>
  </main>
  <div class="status"></div>

  <footer class="task">
    <button class="start" aria-label="开始"><svg viewBox="0 0 16 16"><path d="M0 2.500L7 1.500v6H0zM8 1.300L16 0v7.500H8zM0 8.500h7v6L0 13.500zM8 8.500h8V16l-8-1.300z" fill="#000"/></svg></button>
    <label class="search"><svg viewBox="0 0 16 16"><circle cx="10" cy="6" r="5" fill="none" stroke="#222" stroke-width="1.300"/><path d="M6.500 9.500L1 15" stroke="#222" stroke-width="1.300"/></svg><input value="在此键入进行搜索" aria-label="搜索"></label>
    <button class="tv" aria-label="任务视图"><svg viewBox="0 0 16 16"><path d="M1 0v2h9V0M1 4h9v8H1zM1 16v-2h9v2M14 0v3M14 8v8M13 4h2v3h-2z" fill="none" stroke="#222" stroke-width="1.300"/></svg></button>
    <button class="app" aria-label="计算器"><svg viewBox="0 0 24 24"><path d="M3 0h18v24H3z" fill="#3c4348"/><path d="M5 2h14v4H5z" fill="#fff"/><path d="M6 10h13M6 14h13M6 18h13M6 21h13" stroke="#fff" stroke-width="2" stroke-dasharray="2 1.600"/></svg></button>
    <button class="app" aria-label="Edge"><svg viewBox="0 0 24 24"><circle cx="12" cy="12" r="12" fill="url(#edgeg)"/><path d="M1 9Q4 0 13 0q11 1 11 10-1 6-7 6-4-1-3-4Q14 6 8 6 3 6 1 9z" fill="#42cc9a"/><path d="M9 13q-1 7 7 8 3 0 5-1-4 5-10 4Q3 22 3 14q1-6 8-5-2 2-2 4z" fill="#1a8ad6"/><path d="M14 12q-1 4 3 4 3 1 6-1-3 3-7 3-5-1-5-4 1-3 3-2z" fill="#e6f4fa"/></svg></button>
    <button class="app" aria-label="文件资源管理器"><svg viewBox="0 0 24 24"><path d="M1 3h9l2 3h11v15H1z" fill="#ffd05a"/><path d="M1 3h9l1 3H1z" fill="#d9930c"/><path d="M5 21v-8h14v8h-4v-4H9v4z" fill="#2f8fd8"/></svg></button>
    <button class="app" aria-label="百度网盘"><svg viewBox="0 0 24 24"><rect width="24" height="24" rx="5" fill="#fff"/><g fill="none" stroke-width="2.500"><circle cx="12" cy="8" r="3.500" stroke="#3a9cf8"/><circle cx="7.500" cy="14" r="3.500" stroke="#f0466a"/><circle cx="16.500" cy="14" r="3.500" stroke="#27b0f5"/></g><path d="M8 23h8" stroke="#e33" stroke-width="2"/></svg></button>
    <button class="app" aria-label="WPS"><svg viewBox="0 0 24 24"><rect x="1" y="1" width="22" height="22" rx="3" fill="#2f80f5"/><path d="M5 8h14l-3 9-4-7-3 7-4-9" fill="none" stroke="#fff" stroke-width="1.800"/></svg></button>
    <button class="app" aria-label="NX"><svg viewBox="0 0 24 24"><path d="M0 3h21v21H0z" fill="#159a9c"/><path d="M2 0h22v21H2z" fill="#8c120e"/><text x="5" y="15" font-size="10" font-weight="700" fill="#fff">NX</text></svg></button>
    <button class="app on" aria-label="任务管理器"><svg viewBox="0 0 24 24"><path d="M1 6h5v14H1z" fill="#bbb" stroke="#777"/><path d="M5 3l16-1 2 13-15 2z" fill="#e8e8e8" stroke="#888"/><path d="M7 5l12-1 1 9-11 1z" fill="#fff"/><path d="M8 11l3-3 2 3 2-5 3 4" fill="none" stroke="#27b" stroke-width="1.500"/><path d="M10 20l8-2 2 2-8 3z" fill="#aaa"/></svg></button>
    <div class="tray">
      <span class="two mem">27%<br>内存使用</span>
      <svg viewBox="0 0 16 16"><path d="M2 11l6-6 6 6" fill="none" stroke="#123" stroke-width="1.400"/></svg>
      <svg viewBox="0 0 16 16"><circle cx="8" cy="9" r="7" fill="#39a4ee"/><path d="M3 7q5-4 10 0v5q-5 4-10 0z" fill="#9bdcff"/><path d="M6 8v3M10 8v3" stroke="#024" stroke-width="1.500"/><circle cx="8" cy="1.500" r="1.500" fill="#39a4ee"/></svg>
      <svg viewBox="0 0 16 16"><ellipse cx="7" cy="10" rx="6" ry="5.500" fill="#c22"/><circle cx="7" cy="5" r="4.500" fill="#111"/><ellipse cx="7" cy="11" rx="3.500" ry="4" fill="#fff"/><path d="M5 4h1M8 4h1" stroke="#fff" stroke-width="2"/><path d="M8 8h8v5h-5l-2 2z" fill="#fb3" stroke="#a60" stroke-width=".6"/></svg>
      <svg viewBox="0 0 16 16"><ellipse cx="6" cy="6" rx="6" ry="5" fill="#2bcf5c"/><ellipse cx="11" cy="11" rx="5" ry="4" fill="#e6e6e6"/></svg>
      <svg viewBox="0 0 16 16"><path d="M2 14Q2 3 14 2M6 14q0-7 8-8M10 14q0-3 4-4" fill="none" stroke="#222" stroke-width="1.300"/><circle cx="13.500" cy="13.500" r="1.500" fill="#222"/></svg>
      <svg viewBox="0 0 16 16"><path d="M1 6h3l4-4v12l-4-4H1zM10 6q1 2 0 4M12 4q3 4 0 8M14 2q4 6 0 12" fill="none" stroke="#222"/></svg>
      <span class="eng">ENG</span>
      <span class="two">17:50:05<br>2021/2/9</span>
      <i></i>
    </div>
  </footer>

  <section class="dlg">
    <header></header>
    <div class="msg">轨生成期间出现警告。<br>是否要查看这些警告?</div>
    <div class="again">再显示此消息</div>
    <button>否(<u>N</u>)</button>
  </section>

  <section class="tm">
    <header><svg viewBox="0 0 18 16"><path d="M1 5h3v10H1z" fill="#bbb" stroke="#888"/><path d="M5 1h12v10H5z" fill="#e6f5fc" stroke="#999" stroke-width="1.500"/><path d="M6 7l3-3 3 4 4-2" fill="none" stroke="#0a84c8"/><path d="M9 12h4v2h2v1H7v-1h2z" fill="#999"/></svg><h2>任务管理器</h2>
      <button aria-label="最小化"><svg viewBox="0 0 12 12"><path d="M1 6.500h10" stroke="#000"/></svg></button><button aria-label="最大化"><svg viewBox="0 0 12 12"><path d="M1.500 1.500h9v9h-9z" fill="none" stroke="#000"/></svg></button><button aria-label="关闭"><svg viewBox="0 0 12 12"><path d="M1 1l10 10M11 1L1 11" stroke="#000"/></svg></button></header>
    <nav class="tmenu"><a href="#">文件(F)</a><a href="#">选项(O)</a><a href="#">查看(V)</a></nav>
    <nav class="ttabs"><a href="#">进程</a><a href="#" class="on">性能</a><a href="#">应用历史记录</a><a href="#">启动</a><a href="#">用户</a><a href="#">详细信息</a><a href="#">服务</a></nav>
    <div class="tbody">
      <div class="tlist">
        <ul>
          <li><svg class="g" viewBox="0 0 60 40"><rect x=".5" y=".5" width="59" height="39" fill="#fff" stroke="#117dbb"/><path d="M1 39l1-2 2 2 12 0 1-2 2 2 5-1 3 1 8-1 3 1 8-1 3 0 6 1" fill="none" stroke="#117dbb"/></svg><div><b>CPU</b><span>1%&nbsp; 4.46 GHz</span></div></li>
          <li class="on"><svg class="g" viewBox="0 0 60 40"><rect x=".5" y=".5" width="59" height="39" fill="#fff" stroke="#8b12ae"/><path d="M1 29.500h58v10H1z" fill="#f4f2f4"/><path d="M1 29.500h58" stroke="#8b12ae"/></svg><div><b>内存</b><span>8.6/31.9 GB (27%)</span></div></li>
          <li><svg class="g t" viewBox="0 0 60 50"><rect x=".5" y=".5" width="59" height="49" fill="#fff" stroke="#4da60c"/><path d="M22 49l2-3 1 3M31 49l1-3 1 3M35 49l1-4 1 4" fill="none" stroke="#4da60c"/></svg><div><b>磁盘 0 (F: G: H:</b><span>HDD</span><span>0%</span></div></li>
          <li><svg class="g t" viewBox="0 0 60 50"><rect x=".5" y=".5" width="59" height="49" fill="#fff" stroke="#4da60c"/></svg><div><b>磁盘 1 (E:)</b><span>SSD</span><span>0%</span></div></li>
          <li><svg class="g t" viewBox="0 0 60 50"><rect x=".5" y=".5" width="59" height="49" fill="#fff" stroke="#4da60c"/></svg><div><b>磁盘 2 (C: D:)</b><span>SSD</span><span>0%</span></div></li>
          <li><svg class="g t" viewBox="0 0 60 50"><rect x=".5" y=".5" width="59" height="49" fill="#fff" stroke="#a74f01"/><path d="M15 49l1-48h1l1 48M23 49l1-8 1 8M46 49l1-26 1 26M52 49l1-18 2 4 1 14" fill="#f3d9c4" stroke="#a74f01"/></svg><div><b>Wi-Fi</b><span>WLAN 5</span><span><i>发送:</i> 0 <i>接收:</i> 0 Kbp</span></div></li>
          <li><svg class="g t" viewBox="0 0 60 50"><rect x=".5" y=".5" width="59" height="49" fill="#fff" stroke="#117dbb"/><path d="M20 49l2-13 1 3 1 10 2-48 1 48M43 49l2-48 2 48M51 49l1-3 1 3" fill="#a8d4ec" stroke="#117dbb"/></svg><div><b>GPU 0</b><span>NVIDIA GeForce...</span><span>5%&nbsp; (46 °C)</span></div></li>
        </ul>
        <div class="sb"><svg viewBox="0 0 16 16"><path d="M4 10l4-4 4 4" fill="none" stroke="#444" stroke-width="2"/></svg><span></span><svg viewBox="0 0 16 16"><path d="M4 6l4 4 4-4" fill="none" stroke="#444" stroke-width="2"/></svg></div>
      </div>
      <div class="detail">
        <div class="dh"><h3>内存</h3><span>32.0 GB</span></div>
        <div class="cap"><span>内存使用量</span><span>31.9 GB</span></div>
        <svg class="chart" viewBox="0 0 550 104" preserveAspectRatio="none">
          <path d="M0 76.500H190Q198 75 208 75H220Q228 75 236 76.500H550V104H0z" fill="#f4f2f4"/>
          <path d="M19.500 0v104M56.500 0v104M93.500 0v104M130.500 0v104M167.500 0v104M205.500 0v104M242.500 0v104M279.500 0v104M316.500 0v104M353.500 0v104M391.500 0v104M428.500 0v104M465.500 0v104M502.500 0v104M540.500 0v104M0 11.500h550M0 21.500h550M0 31.500h550M0 42.500h550M0 52.500h550M0 62.500h550M0 73.500h550M0 83.500h550M0 93.500h550" fill="none" stroke="#8b12ae" stroke-opacity=".15"/>
          <path d="M0 76.500H190Q198 75 208 75H220Q228 75 236 76.500H550" fill="none" stroke="#8b12ae"/>
          <rect x=".5" y=".5" width="549" height="103" fill="none" stroke="#8b12ae"/>
        </svg>
        <div class="cap axis"><span>60 秒</span><span>0</span></div>
        <div class="cap comp"><span>内存组合</span></div>
        <div class="mix"><span></span><span></span><span></span></div>
        <div class="stats">
          <div class="left">
            <dl><div><dt>使用中(已压缩)</dt><dd>8.6 GB (99.6 MB)</dd></div><div><dt>可用</dt><dd>23.3 GB</dd></div></dl>
            <dl><div><dt>已提交</dt><dd>10.9/36.9 GB</dd></div><div><dt>已缓存</dt><dd>21.5 GB</dd></div></dl>
            <dl><div><dt>分页缓冲池</dt><dd>1.4 GB</dd></div><div><dt>非分页缓冲池</dt><dd>711 MB</dd></div></dl>
          </div>
          <dl class="right"><dt>速度:</dt><dd>3200 MHz</dd><dt>已使用的插槽:</dt><dd>2/4</dd><dt>外形规格:</dt><dd>DIMM</dd><dt>为硬件保留的内存:</dt><dd>79.6 MB</dd></dl>
        </div>
      </div>
    </div>
    <footer><button class="less"><svg viewBox="0 0 20 20"><circle cx="10" cy="10" r="9" fill="#fff" stroke="#888"/><path d="M5 12l5-5 5 5" fill="none" stroke="#aaa" stroke-width="1.500"/></svg>简略信息(<u>D</u>)</button><i></i><a href="#"><svg viewBox="0 0 16 16"><circle cx="8" cy="8" r="7" fill="#eee" stroke="#777" stroke-width="1.500"/><circle cx="8" cy="8" r="5" fill="#fff" stroke="#bbb"/><path d="M5 4l4 6" stroke="#d22" stroke-width="2.500"/></svg>打开资源监视器</a></footer>
  </section>

  <div class="mark" aria-hidden="true">
    <svg viewBox="0 0 72 82"><path d="M36 0l36 20v41L36 82 0 61V20z" fill="#5bb9ea" fill-opacity=".45"/><path d="M52 8l20 12v41Q70 30 52 8z" fill="#1b8fd0" fill-opacity=".6"/><path d="M13 13L36 0l17 9q4 8 3 20Q40 10 13 13z" fill="#9ab5c4" fill-opacity=".6"/><path d="M36 23l16 9v18l-16 10-16-10V32z" fill="#a8dcf8" fill-opacity=".7"/><path d="M20 32l16 9 16-9M36 41v19" fill="none" stroke="#fff" stroke-width="1.500"/><path d="M0 30Q20 10 52 22M2 60Q0 35 24 20M16 72Q10 50 22 34M56 28q4 20-4 28M72 40Q66 60 36 60" fill="none" stroke="#fff" stroke-opacity=".8" stroke-width="1.500"/></svg>
    <div><b>3D世界网</b><span>WWW.3DSJW.COM</span></div>
  </div>
</div>
</body>
</html>
```
FILE: styles.css
```css
*{box-sizing:border-box}
body{margin:0;font:12px/16px "Noto Sans","Noto Sans CJK SC",sans-serif;color:#222}
button{border:0;background:none;padding:0;margin:0;font:inherit;color:inherit;display:flex;align-items:center;justify-content:center}
a{color:inherit;text-decoration:none}
input,select{font:inherit;color:inherit}
svg{display:block;flex:none;width:16px;height:16px}
h1,h2,h3,dl,dd,ul{margin:0;padding:0;font-weight:400}
.defs{position:absolute;width:0;height:0}
.desktop{position:relative;display:flex;flex-direction:column;min-height:100vh;overflow:hidden}
.dn{flex:none;width:0;height:0;border:3px solid transparent;border-top:4px solid #222;border-bottom:0}
.dn.white{border-top-color:#fff}
.dn.lg{border-width:5px 4px 0}
.s24{width:24px;height:24px}
.s12{width:12px;height:12px}
.sel{background:#cce5ea;box-shadow:inset 0 0 0 1px #a9d3dd}

.title{display:grid;grid-template-columns:56fr auto 44fr;grid-template-rows:26px 30px;background:linear-gradient(90deg,#00638a,#16708f 35%,#2f87a4);color:#fff;align-items:center}
.title h1{font-size:12px}
.quick{display:flex;align-items:center;gap:7px;padding-left:4px;font-size:11px}
.quick .nx{font-size:21px;font-weight:800;line-height:24px;width:34px;text-align:center;flex:none}
.quick .vs{width:1px;height:22px;background:#0a5a78;margin:0 -1px 0 0}
.wide{gap:4px}
.dn.bar{position:relative;border-top-color:#fff}
.dn.bar::before{content:"";position:absolute;left:-3px;top:-7px;width:6px;height:1px;background:#fff}
.brand{display:flex;justify-content:flex-end;align-items:center;gap:12px;padding-right:8px}
.brand b{font-size:12px;font-weight:800;margin-right:16px}
.brand svg{width:12px;height:12px}
.tabs{grid-column:1/3;display:flex;font-size:13px;align-self:stretch;padding-left:4px}
.tabs a{padding:5px 16px 0;line-height:20px;border-bottom:3px solid transparent;white-space:nowrap}
.tabs a:first-child{padding-right:26px}
.tabs .on{color:#ffd24d;border-color:#ffc840}
.help{display:flex;justify-content:flex-end;align-items:center;gap:10px;padding-right:6px;font-size:11px;grid-column:3}
.find{position:relative;display:flex;width:128px}
.find input{width:100%;height:21px;border:1px solid #888;padding:0 1px;color:#222;background:#fff}
.find svg{position:absolute;right:2px;top:2px}
.tut{gap:4px}
.dot{width:13px;height:13px;border-radius:50%;background:#878787;margin-left:3px}

.ribbon{display:flex;height:94px;border-bottom:1px solid #d5d5d5;font-size:11px;background:#fff}
.grp{flex:none;display:flex;flex-direction:column;margin:5px 0 4px;border-right:1px solid #d5d5d5}
.body{display:flex;flex:1;align-items:flex-start}
.big{flex-direction:column;justify-content:flex-start;padding:0 4px;white-space:nowrap;height:71px;color:#222}
.big svg{width:32px;height:32px;color:#444;margin-bottom:4px}
.big .dn{margin-top:4px}
.big.sel{margin-top:-3px;padding-top:3px;height:74px}
.col{display:flex;flex-direction:column;gap:11px}
.grp footer{position:relative;height:16px;margin-bottom:-2px;text-align:center;color:#00638a;padding-right:16px;line-height:14px}
.grp footer .dn{position:absolute;right:8px;top:7px}
.g1{width:218px}.g1 .body{padding-left:9px;gap:1px}.g1 .col{padding:4px 0 0 4px}
.g2{width:55px}.g2 .body{justify-content:center}
.g3{width:311px}.g3 .body{padding-left:7px;gap:1px}.g3 .big:last-child{margin-left:6px}
.g4{width:303px}.g4 .body{padding-left:9px}.g4 .big{min-width:52px}
.g4 .c4{gap:7px;margin-left:2px}
.sq{width:31px;height:32px}.sq svg{width:26px;height:26px}
.drop{gap:8px;padding-left:4px}
.tri{gap:8px;margin-left:21px}
.g4 .tri + .big{margin-left:8px}
.g5{width:256px}.g5 .body{padding-left:12px}
.ctl{display:grid;grid-template-columns:24px 24px 24px 16px;row-gap:11px;justify-items:center;align-items:center;padding-top:4px}
.ctl svg{width:24px;height:24px}
.ctl + .big{margin-left:4px}
.speed{display:flex;flex-direction:column;align-items:center;gap:5px;margin-left:4px;padding-top:8px}
.speed input{appearance:none;width:97px;height:16px;margin:0;background:linear-gradient(#ababab,#ababab) center/100% 5px no-repeat}
.speed input::-webkit-slider-thumb{appearance:none;width:8px;height:16px;background:#00638a;border:1px solid #444}
.g6{width:150px}.g6 .body{flex-direction:column;gap:14px;padding:8px 0 0 7px;flex:1}
.mini{display:flex;gap:7px}.mini i{width:1px;background:#d5d5d5;margin:0 -2px}
.g7{width:111px}.g7 .body{padding-left:8px;gap:1px}
.g8{width:185px}.g8 .body{padding-left:7px}.g8 .big:last-child{margin-left:7px}
.end{margin:82px 6px 0 auto}

.bar2{display:flex;align-items:center;height:29px;border-bottom:1px solid #a8a8a8;background:#fff;padding-left:12px;gap:2px;font-size:11px}
.menu{gap:6px}.menu svg{width:11px;height:11px}
.menu u{margin:0 -6px}
.sep{width:1px;height:22px;background:#d5d5d5;margin:0 7px}
.tb{width:23px;height:23px}
.tb + .dn{margin:0 4px 0 1px}
.pick + .tb{margin-left:-1px}
.pick{position:relative;display:flex;margin:0 4px 0 1px}
.pick select{appearance:none;width:149px;height:23px;border:1px solid #777;padding:0 4px;background:#fff;border-radius:0}
.p2 select{width:156px}
.pick .dn{position:absolute;right:4px;top:10px}
.bar2 .end{margin:8px 6px 0 auto}

.work{flex:1;display:flex;min-height:0}
.rail{flex:none;width:32px;background:#dcdcdc;border-right:1px solid #a8a8a8;display:flex;flex-direction:column}
.rail button{height:42px;width:32px;padding-left:3px}
.rail svg{width:24px;height:24px}
.rail .gear{height:40px;padding:0 2px 14px 0}.rail .gear svg{width:16px;height:16px}
.rail .on{height:45px;background:#fff;border:1px solid #a8a8a8;border-right:0;margin-left:2px;width:30px;padding:0}
.rail .far{height:54px;padding-top:12px}
.nav{flex:none;width:589px;display:flex;flex-direction:column;padding:0 9px 6px 7px;border-right:1px solid #a8a8a8;background:#fff}
.navhead{display:flex;justify-content:space-between;align-items:center;height:28px;padding:0 6px 0 4px}
.navhead button{width:12px;height:12px;border:1px solid #222;border-top-width:2px}
.treebox{position:relative;flex:1;border:1px solid #ccc;border-bottom:4px solid #c4c4c4;background:repeating-linear-gradient(#fff 0 19px,#e6e6e6 19px 20px,#f9f9f9 20px 39px,#e6e6e6 39px 40px) 0 22px}
table{border-collapse:separate;border-spacing:0;table-layout:fixed;width:100%}
.c0{width:200px}.c1{width:50px}.c2{width:100px}
th{font-weight:400;text-align:left;height:22px;background:#efefef;border:solid #d5d5d5;border-width:0 1px 1px 0;padding:0 5px}
td{height:20px;padding:0 4px;border:solid #e4e4e4;border-width:0 1px 1px 0;line-height:18px}
td:first-child{border-right-color:#000;padding:0}
.tn{display:flex;align-items:center;gap:3px;height:19px;white-space:nowrap}
.l0{padding-left:3px}.l1{padding-left:20px}.l2{padding-left:39px}.l3{padding-left:42px}
.tn b{color:#ffc840;font-size:16px;width:9px;text-align:center}
.tn em{font-style:normal}
.cur td:not(:last-child){background:#8cc1d1}
.cur td:first-child{background:linear-gradient(90deg,#fff 54px,#8cc1d1 54px)}
.twigs{position:absolute;left:0;top:21px;width:40px;height:120px}
.fold{justify-content:flex-start;height:24px;border-bottom:2px solid #ccc;font-size:14px;color:#00638a;gap:11px;padding-left:8px}
.fold::before{content:"";border:4px solid transparent;border-left:5px solid #00638a;border-right:0}
.fold.first{padding-top:2px}
.view{flex:1;min-width:0;display:flex;flex-direction:column}
.files{display:flex;height:26px;border-bottom:2px solid #005f87;background:#fff}
.files a{display:flex;align-items:center;gap:4px;padding:0 6px 2px;white-space:nowrap}
.files .m1{margin-left:15px}
.files .on{background:#005f87;color:#fff;margin-left:15px;gap:5px}
.canvas{flex:1;min-height:0;position:relative;background:linear-gradient(#222223,#3c3d3e 45%,#58595b);border-left:2px solid #222;border-right:1px solid #ccc;border-bottom:1px solid #ccc}
.canvas svg{position:absolute;left:-2px;top:0;width:calc(100% + 3px);height:100%;font-size:13px}
.ink path{vector-effect:non-scaling-stroke;stroke-width:1}
.ink{stroke:#222}
.ink .cut{stroke:#0ff}
.ink .thick{stroke-width:2}
.status{height:22px;background:#fff;border-top:1px solid #a8a8a8}

.task{display:flex;height:40px;background:linear-gradient(90deg,#cfe7ee,#d2e4ee 50%,#d5daeb);align-items:stretch}
.start{width:48px}
.search{display:flex;align-items:center;gap:12px;width:344px;background:#fff;border:1px solid #ccc;padding:0 10px;font-size:14px}
.search input{border:0;padding:0;width:240px;background:none;color:#333}
.tv{width:48px}
.app{width:40px;margin-left:9px;border-bottom:2px solid #0078d7;padding-bottom:0}
.tv + .app{margin-left:7px}
.app svg{width:24px;height:24px}
.app.on{width:48px;margin-left:5px;background:#e9f3f7}
.tray{margin-left:auto;display:flex;align-items:center;gap:8px;padding-right:4px}
.two{text-align:center;line-height:18px;white-space:nowrap}
.tray .mem{margin-right:3px}
.tray .eng{margin:0 9px 0 2px}
.tray i{width:1px;align-self:stretch;background:#a9b4c8;margin-left:4px}

.dlg{position:absolute;left:859px;top:453px;width:222px;background:#f0f0f0;padding-bottom:10px;box-shadow:0 0 0 1px #777}
.dlg header{height:28px;background:#005f87;margin-bottom:8px}
.msg{padding-left:64px;line-height:17px}
.again{padding-left:69px;margin-top:6px}
.dlg button{margin:7px 14px 0 auto;width:64px;height:25px;border:1px solid #005f87;color:#005f87}

.tm{position:absolute;left:116px;top:381px;width:814px;height:593px;background:#fff;border:1px solid #666;box-shadow:0 4px 16px rgba(0,0,0,.4);display:flex;flex-direction:column;color:#000}
.tm > header{display:flex;align-items:center;height:30px;padding:0 1px 0 8px}
.tm > header > svg{width:17px;height:16px}
.tm h2{font-size:12px;margin:0 auto 0 4px}
.tm > header button{width:45px;height:29px}
.tm > header button svg{width:12px;height:12px}
.tmenu{display:flex;gap:16px;padding:2px 7px;border-bottom:2px solid #f0f0f0;line-height:16px}
.ttabs{display:flex;align-items:flex-end;height:26px;padding:0 2px;border-bottom:1px solid #d9d9d9;flex:none}
.ttabs a{height:22px;line-height:20px;padding:0 5px;background:#f0f0f0;border:1px solid #d9d9d9;border-left:0;border-bottom:0;white-space:nowrap}
.ttabs a:first-child{border-left:1px solid #d9d9d9}
.ttabs .on{height:25px;background:#fff;margin-bottom:-1px;padding:0 6px}
.tbody{flex:1;min-height:0;display:flex;padding:9px 24px 0 4px}
.tlist{flex:none;display:flex;width:208px;height:456px;border-right:1px solid #ccc;margin-right:26px}
ul{width:190px;overflow:hidden;list-style:none}
li{display:flex;gap:10px;height:70px;padding:10px 0 0 10px;white-space:nowrap}
li:nth-child(-n+2){height:60px}
li.on{background:#cce8ff}
li div{margin-top:-4px;display:flex;flex-direction:column}
li b{font-weight:400;font-size:16px;line-height:20px}
li span{line-height:17px}
li i{font-style:normal;color:#707070}
.g{width:60px;height:40px}.g.t{height:50px}
.sb{display:flex;flex-direction:column;width:15px;margin-left:1px;background:#f0f0f0;align-items:center}
.sb span{flex:1;align-self:stretch;background:#cdcdcd;margin-bottom:13px}
.detail{flex:1;min-width:0}
.dh{display:flex;justify-content:space-between;align-items:center;height:40px;padding-top:4px}
.dh h3{font-size:27px;line-height:32px;margin-left:-1px}
.dh span{font-size:16px;line-height:20px;padding-top:6px}
.cap{display:flex;justify-content:space-between;font-size:11px;color:#707070;margin:4px 0 3px;line-height:16px}
.chart{width:100%;height:104px}
.axis{margin:2px 0 6px}
.comp{margin-bottom:5px}
.mix{display:grid;grid-template-columns:149px 1fr 28px;height:53px;border:1px solid #8b12ae}
.mix span + span{border-left:1px solid #c9a6d4}
.mix span:first-child{background:#f4f2f4}
.stats{display:flex;margin-top:23px}
.left{width:282px;flex:none;display:flex;flex-direction:column;gap:9px}
.left dl{display:flex;gap:20px;white-space:nowrap}
dt{color:#707070}
.left dt{line-height:17px}
.left dd{font-size:21px;line-height:26px}
.right{display:grid;grid-template-columns:113px auto;line-height:20px;align-content:start}
.right dt,.right dd{margin-top:-1px;margin-bottom:1px}
.tm > footer{display:flex;align-items:center;height:49px;padding:0 7px;gap:7px}
.less{font-size:13px}.less svg{width:20px;height:20px;margin-right:7px}
.tm > footer i{width:1px;height:14px;background:#ccc}
.tm > footer a{display:flex;align-items:center;gap:5px;color:#0066cc}

.mark{position:absolute;left:1637px;bottom:13px;display:flex;gap:9px;pointer-events:none;color:rgba(255,255,255,.5)}
.mark svg{width:72px;height:82px}
.mark div{display:flex;flex-direction:column;padding-top:10px;white-space:nowrap}
.mark b{font-size:41px;line-height:44px;font-weight:700}
.mark span{font-size:18px;line-height:24px;font-weight:600}
```
